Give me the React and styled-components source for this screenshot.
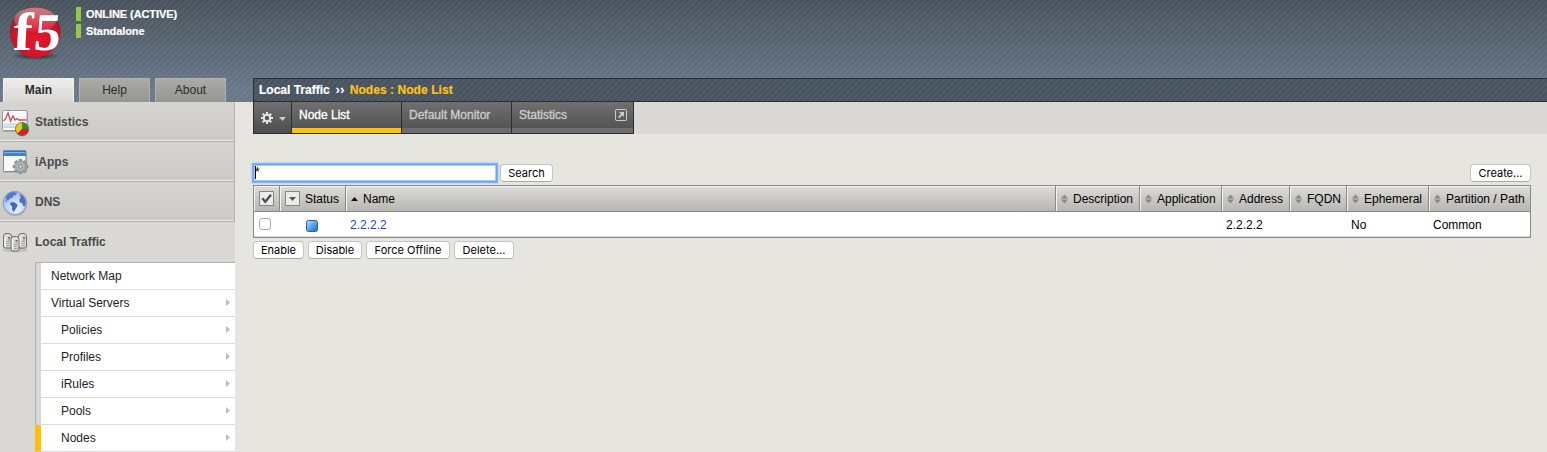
import React from 'react';
import styled, { createGlobalStyle, css } from 'styled-components';

const GlobalStyle = createGlobalStyle`
  * { box-sizing: border-box; }
  html, body { margin: 0; padding: 0; height: 452px; overflow: hidden; }
  body {
    background: #e6e5e0;
    color: #000;
    font: 12px/14px "Liberation Sans", Arial, Helvetica, sans-serif;
  }
`;

const stripes = 'repeating-linear-gradient(135deg, rgba(255,255,255,0.05) 0 1.2px, rgba(255,255,255,0) 1.9px 3.5px, rgba(255,255,255,0.05) 4.243px)';

const Page = styled.div`
  width: 1547px;
  height: 452px;
  overflow: hidden;
`;

const Header = styled.header`
  display: flex;
  height: 102px;
  background: ${stripes}, linear-gradient(#48525c 0, #5a6774 50px, #68788a 90px);
`;

const Brand = styled.div`
  display: flex;
  flex-direction: column;
  justify-content: space-between;
  width: 253px;
  flex: none;
`;

const BrandTop = styled.div`
  display: flex;
  padding: 3px 0 0 6px;
`;

const StatusList = styled.div`
  display: flex;
  flex-direction: column;
  gap: 3px;
  padding: 4px 0 0 12px;
`;

const StatusLine = styled.div`
  height: 14px;
  padding-left: 5px;
  border-left: 5px solid #94c847;
  color: #fff;
  font-size: 11px;
  font-weight: bold;
  white-space: nowrap;
  letter-spacing: -0.08px;
  -webkit-text-stroke: 0.2px #fff;
`;

const Tabs = styled.nav`
  display: flex;
  gap: 5px;
  padding-left: 3px;
`;

const Tab = styled.a`
  width: 71px;
  height: 24px;
  padding-top: 4px;
  border: 1px solid #b1b1ad;
  border-bottom: 0;
  background: linear-gradient(#aaaaa6, #969691);
  color: #2b2b2b;
  text-align: center;
  ${(p) => p.$active && css`
    border-color: #f3f3f1;
    background: linear-gradient(#eeedeb, #d8d7d3);
    font-weight: bold;
  `}
`;

const Breadcrumb = styled.div`
  flex: 1;
  align-self: flex-end;
  display: flex;
  height: 24px;
  padding: 4px 0 0 5px;
  border: 1px solid #2c2e33;
  border-right: 0;
  background: ${stripes}, #485360;
  color: #fff;
  font-weight: bold;
  white-space: pre;
  -webkit-text-stroke: 0.2px currentColor;
`;

const Crumb = styled.span`
  color: ${(p) => (p.$current ? '#ffc20e' : '#fff')};
  letter-spacing: ${(p) => p.$spacing || 0};
  margin-right: ${(p) => p.$gap || 0};
  -webkit-text-stroke: 0.2px currentColor;
`;

const Body = styled.div`
  display: flex;
`;

const Sidebar = styled.aside`
  width: 235px;
  height: 350px;
  flex: none;
  background: #dad9d5;
`;

const Section = styled.a`
  display: flex;
  height: 40px;
  padding-left: 2px;
  color: #4a4a4a;
  font-weight: bold;
  ${(p) => !p.$open && css`
    border-right: 1px solid #b2b1ad;
    border-bottom: 1px solid #acaba8;
    box-shadow: inset 0 -1px #eeeeeb;
    background: linear-gradient(#d5d4d0, #cbcac5);
  `}
`;

const SectionIcon = styled.span`
  width: 33px;
  padding-top: 6px;
`;

const SectionLabel = styled.span`
  padding-top: 13px;
`;

const Submenu = styled.div`
  margin-left: 35px;
  border-top: 1px solid #b2b2b2;
  border-left: 1px solid #b2b2b2;
`;

const SubItem = styled.a`
  display: flex;
  align-items: center;
  justify-content: space-between;
  height: 27px;
  padding: 0 5px 1px ${(p) => (p.$nested ? 20 : 10)}px;
  border-left: 5px solid #d7d7d7;
  border-bottom: 1px solid #dcdcdc;
  background: #fff;
  color: #222;
  ${(p) => p.$active && css`
    margin-left: -1px;
    border-left: 6px solid #ffc107;
  `}
`;

const Main = styled.main`
  flex: 1;
  padding-left: 18px;
`;

const MenuBar = styled.div`
  display: flex;
  height: 32px;
  background: #dad9d5;
`;

const MenuTab = styled.a`
  display: flex;
  justify-content: space-between;
  width: ${(p) => p.$width}px;
  height: 32px;
  padding: 6px 6px 0 7px;
  border-right: 1px solid #2d2d2d;
  border-bottom: 1px solid #2d2d2d;
  background: linear-gradient(#707070, #545454 26px, #6d6d6d 26px);
  color: #ccc;
  -webkit-text-stroke: 0.35px currentColor;
  ${(p) => p.$active && css`
    color: #fff;
    background: linear-gradient(#707070, #545454 26px, #ffc20e 26px);
  `}
  ${(p) => p.$gear && css`
    padding: 8px 5px 0 6px;
    border-left: 1px solid #2d2d2d;
    background: linear-gradient(#707070, #4c4c4c);
  `}
`;

const Toolbar = styled.div`
  display: flex;
  align-items: center;
  height: 20px;
  margin: 29px 16px 2px 0;
`;

const SearchInput = styled.div`
  width: 244px;
  height: 18px;
  margin-right: 3px;
  padding-left: 1px;
  border: 1px solid #6ba5f0;
  outline: 1px solid #83b3f1;
  box-shadow: 0 0 2px 1px #8fbaf2, inset 0 0 0 1px #a5cbf7;
  background: #fff;
  line-height: 15px;
`;

const Caret = styled.span`
  display: inline-block;
  width: 1px;
  height: 13px;
  margin-right: -1px;
  background: #000;
  vertical-align: top;
  margin-top: 1px;
`;

const Button = styled.button`
  width: ${(p) => p.$width}px;
  height: 18px;
  padding: 0;
  border: 1px solid #c4c4c1;
  border-bottom-color: #aaa;
  border-radius: 4px;
  background: #fff;
  color: #000;
  font: 11px/15px Inter, sans-serif;
  letter-spacing: 0;
  margin-left: ${(p) => (p.$end ? 'auto' : 0)};
`;

const Table = styled.div`
  margin-right: 16px;
  border: 1px solid #888885;
`;

const Row = styled.div`
  display: grid;
  grid-template-columns: 26px 66px 1fr 84px 82px 68px 57px 82px 101px;
`;

const HeadCell = styled.div`
  display: flex;
  align-items: center;
  gap: 5px;
  height: 26px;
  padding-left: 5px;
  border-right: ${(p) => (p.$last ? 0 : '1px solid #888885')};
  border-bottom: 1px solid #888885;
  box-shadow: inset 1px 1px #f3f3f1;
  background: linear-gradient(#dddcd9, #b7b6b1);
  white-space: nowrap;
`;

const Cell = styled.div`
  display: flex;
  height: 25px;
  padding: 6px 0 0 ${(p) => p.$pad || 4}px;
  border-bottom: 1px solid #ddd;
  background: #fff;
  color: ${(p) => (p.$link ? '#1a48bd' : '#000')};
`;

const Checkbox = styled.span`
  width: 12px;
  height: 12px;
  border: 1px solid #aaa;
  border-radius: 3px;
  background: #fff;
`;

const StatusIcon = styled.span`
  width: 12px;
  height: 12px;
  margin-top: 2px;
  border: 1px solid #2462a4;
  border-radius: 2.5px;
  background: linear-gradient(135deg, #b5d9fb, #4b98e6 60%, #1c70cd);
`;

const Actions = styled.div`
  display: flex;
  gap: 4px;
  padding-top: 3px;
`;

const Logo = () => (
  <svg width="58" height="58" viewBox="0 0 58 58">
    <defs>
      <radialGradient id="ball" cx="0.5" cy="0.62" r="0.58">
        <stop offset="0" stopColor="#e5162b" />
        <stop offset="0.65" stopColor="#d2142a" />
        <stop offset="1" stopColor="#96202b" />
      </radialGradient>
      <linearGradient id="gloss" x1="0" y1="0" x2="0" y2="1">
        <stop offset="0" stopColor="#e9b9b9" stopOpacity="0.6" />
        <stop offset="1" stopColor="#fff" stopOpacity="0" />
      </linearGradient>
      <radialGradient id="shade">
        <stop offset="0" stopColor="#171e25" stopOpacity="0.9" />
        <stop offset="1" stopColor="#171e25" stopOpacity="0" />
      </radialGradient>
    </defs>
    <ellipse cx="29.5" cy="53" rx="25" ry="4" fill="url(#shade)" />
    <circle cx="29.3" cy="29.2" r="25.5" fill="url(#ball)" />
    <ellipse cx="29.3" cy="17" rx="21" ry="12.5" fill="url(#gloss)" />
    <g fill="#fff" fontFamily="Liberation Serif, serif" fontWeight="bold">
      <text transform="translate(6.500 47) skewX(-3) scale(1.08 1)" fontSize="54">f</text>
      <text transform="translate(27 47) skewX(-5)" fontSize="53">5</text>
    </g>
  </svg>
);

const StatisticsIcon = () => (
  <svg width="30" height="30" viewBox="0 0 30 30">
    <rect x="1" y="3" width="25" height="21" rx="1" fill="#8c8c8a" opacity=".6" />
    <rect x="0.5" y="2.5" width="24.5" height="20" rx="1" fill="#fafafa" stroke="#989896" />
    <path d="M1.500 16.500h23M1.500 19h23" stroke="#c6d9e6" strokeWidth="1.8" />
    <path d="M1.500 13l2-2 2.500-6 2.500 8 2.500-5 2 4 2-1.500 2 1.500h7.500" fill="none" stroke="#c94a5a" strokeWidth="1.300" />
    <circle cx="20.300" cy="21.500" r="7" fill="#555" opacity=".4" />
    <circle cx="20" cy="21" r="6.500" fill="#f2c61c" />
    <path d="M20 21V14.500A6.500 6.500 0 0 1 26.500 21z" fill="#23982a" />
    <path d="M20 21H26.500A6.500 6.500 0 0 1 15.400 25.600z" fill="#d81c37" />
    <circle cx="20" cy="21" r="6.500" fill="none" stroke="#675b2b" strokeWidth=".7" />
  </svg>
);

const teeth = [0, 45, 90, 135];

const IAppsIcon = () => (
  <svg width="30" height="30" viewBox="0 0 30 30">
    <rect x="1.500" y="3.500" width="23" height="21" rx="1" fill="#777" opacity=".5" />
    <rect x="1.500" y="3" width="22.500" height="20.500" rx="1" fill="#f8f9fb" stroke="#85888c" />
    <path d="M1.500 3h22.500v5h-22.500z" fill="#3f80cb" />
    <path d="M2 4.500h21.500" stroke="#74b5f2" strokeWidth="1.200" />
    <path d="M1.500 3h22.500" stroke="#27589c" strokeWidth=".8" />
    <g transform="translate(18.500 18.500)">
      {teeth.map((a) => (
        <rect key={a} x="-1.600" y="-7.300" width="3.200" height="14.600" rx=".7" fill="#929c9f" stroke="#717b7e" strokeWidth=".6" transform={`rotate(${a})`} />
      ))}
      <circle r="5.400" fill="#a0abad" />
      <circle r="3.300" fill="#c0c8ca" />
      <circle r="1.900" fill="#e0e2e0" stroke="#697376" />
    </g>
  </svg>
);

const DnsIcon = () => (
  <svg width="30" height="30" viewBox="0 0 30 30">
    <defs>
      <radialGradient id="sea" cx=".55" cy=".7" r=".65">
        <stop offset="0" stopColor="#f4f9ff" />
        <stop offset="1" stopColor="#9dbaf0" />
      </radialGradient>
    </defs>
    <circle cx="13.300" cy="15.800" r="12" fill="#777" opacity=".45" />
    <circle cx="12.800" cy="15" r="11.700" fill="url(#sea)" stroke="#8494b2" strokeWidth=".9" />
    <path d="M3.500 9.500C5 6 8 4 12 4l3 1-1.500 2.500-2-.5-.5 2.500-3 1-1.500 2-2-.5-1.500 1 2.500 1.500z" fill="#5679cc" />
    <path d="M8.500 14.500l3-.5 3.500 2 .5 2-1.500 2.500-2.500 3.500-1.500-2.500v-3l-2-2z" fill="#4368bd" />
    <path d="M18 6l3 2 2 3 .800 4-1 3.500-2-1-.5-2.500-2.500-.5-.5-3 2-2-1.500-1z" fill="#4b6ec2" />
  </svg>
);

const Server = ({ x, y }) => (
  <g transform={`translate(${x} ${y})`}>
    <path d="M.5 3Q.500 1 3 .5h3Q8.500 1 8.500 3v11l-1.500 1H2L.5 14z" fill="#d9d9d6" stroke="#6d6d6b" />
    <path d="M2 3.500v10" stroke="#fff" />
    <path d="M3 8.500h4M3 10.500h4M3 12.500h4" stroke="#999996" strokeWidth=".8" />
    <rect x="5" y="4" width="2" height="1.500" fill="#dd2332" />
    <rect x="5" y="6.300" width="2" height="1.200" fill="#62c848" />
  </g>
);

const LocalTrafficIcon = () => (
  <svg width="30" height="30" viewBox="0 0 30 30">
    <ellipse cx="13" cy="22" rx="13" ry="2.500" fill="#777" opacity=".25" />
    <Server x="1" y="5" />
    <Server x="16" y="5" />
    <Server x="8.500" y="8" />
  </svg>
);

const Arrow = () => (
  <svg width="4" height="7" viewBox="0 0 4 7"><path d="M0 0L4 3.500 0 7z" fill="#bcbcbc" /></svg>
);

const GearIcon = () => (
  <svg width="14" height="16" viewBox="-7 -8 14 16">
    {teeth.map((a) => (
      <rect key={a} x="-1" y="-6" width="2" height="12" fill="#e5e5e5" transform={`rotate(${a})`} />
    ))}
    <circle r="3.200" fill="#595959" stroke="#e5e5e5" strokeWidth="2" />
  </svg>
);

const CaretDown = () => (
  <svg width="7" height="16" viewBox="0 0 7 16"><path d="M0 7h7L3.500 11z" fill="#ccc" /></svg>
);

const PopoutIcon = () => (
  <svg width="12" height="14" viewBox="0 0 12 14">
    <rect x=".5" y="1.500" width="11" height="11" rx="1" fill="none" stroke="#ccc" />
    <path d="M4 4h5v5L7.300 7.300 4.300 10.300 3 9 6 6z" fill="#ccc" />
  </svg>
);

const Sorter = () => (
  <svg width="7" height="10" viewBox="0 0 7 10"><path d="M0 4.500L3.500.5 7 4.500zM0 5.500h7L3.500 9.500z" fill="#888" /></svg>
);

const SortUp = () => (
  <svg width="7" height="4" viewBox="0 0 7 4"><path d="M0 4L3.500 0 7 4z" fill="#111" /></svg>
);

const CheckAll = () => (
  <svg width="15" height="15" viewBox="0 0 15 15">
    <rect x=".5" y=".5" width="14" height="14" fill="#ecebea" stroke="#858583" />
    <path d="M3.300 7.300l3 3.500L12 3.800" fill="none" stroke="#4b4b4b" strokeWidth="2.300" />
  </svg>
);

const DropBox = () => (
  <svg width="15" height="15" viewBox="0 0 15 15">
    <rect x=".5" y=".5" width="14" height="14" fill="#ecebea" stroke="#858583" />
    <path d="M4 6h7L7.500 10z" fill="#555" />
  </svg>
);

const sections = [
  { label: 'Statistics', Icon: StatisticsIcon },
  { label: 'iApps', Icon: IAppsIcon },
  { label: 'DNS', Icon: DnsIcon },
  { label: 'Local Traffic', Icon: LocalTrafficIcon, open: true },
];

const subItems = [
  { label: 'Network Map', leaf: true },
  { label: 'Virtual Servers' },
  { label: 'Policies', nested: true },
  { label: 'Profiles', nested: true },
  { label: 'iRules', nested: true },
  { label: 'Pools', nested: true },
  { label: 'Nodes', nested: true, active: true },
];

const columns = ['Description', 'Application', 'Address', 'FQDN', 'Ephemeral', 'Partition / Path'];

export default function App() {
  return (
    <Page>
      <GlobalStyle />
      <Header>
        <Brand>
          <BrandTop>
            <Logo />
            <StatusList>
              <StatusLine>ONLINE (ACTIVE)</StatusLine>
              <StatusLine>Standalone</StatusLine>
            </StatusList>
          </BrandTop>
          <Tabs>
            <Tab $active>Main</Tab>
            <Tab>Help</Tab>
            <Tab>About</Tab>
          </Tabs>
        </Brand>
        <Breadcrumb>
          <Crumb $gap="6px">Local Traffic</Crumb>
          <Crumb $gap="5px" $spacing="0.5px">››</Crumb>
          <Crumb $current $spacing="0.06px">Nodes : Node List</Crumb>
        </Breadcrumb>
      </Header>
      <Body>
        <Sidebar>
          {sections.map(({ label, Icon, open }) => (
            <Section key={label} $open={open}>
              <SectionIcon><Icon /></SectionIcon>
              <SectionLabel>{label}</SectionLabel>
            </Section>
          ))}
          <Submenu>
            {subItems.map(({ label, nested, active, leaf }) => (
              <SubItem key={label} $nested={nested} $active={active}>
                {label}
                {!leaf && <Arrow />}
              </SubItem>
            ))}
          </Submenu>
        </Sidebar>
        <Main>
          <MenuBar>
            <MenuTab $gear $width={39}><GearIcon /><CaretDown /></MenuTab>
            <MenuTab $active $width={110}>Node List</MenuTab>
            <MenuTab $width={110}>Default Monitor</MenuTab>
            <MenuTab $width={122}>Statistics<PopoutIcon /></MenuTab>
          </MenuBar>
          <Toolbar>
            <SearchInput><Caret />*</SearchInput>
            <Button $width={53}>Search</Button>
            <Button $width={61} $end>Create...</Button>
          </Toolbar>
          <Table>
            <Row>
              <HeadCell><CheckAll /></HeadCell>
              <HeadCell><DropBox />Status</HeadCell>
              <HeadCell><SortUp />Name</HeadCell>
              {columns.map((c, i) => (
                <HeadCell key={c} $last={i === columns.length - 1}><Sorter />{c}</HeadCell>
              ))}
            </Row>
            <Row>
              <Cell $pad={5}><Checkbox /></Cell>
              <Cell $pad={26}><StatusIcon /></Cell>
              <Cell $link>2.2.2.2</Cell>
              <Cell />
              <Cell />
              <Cell>2.2.2.2</Cell>
              <Cell />
              <Cell>No</Cell>
              <Cell>Common</Cell>
            </Row>
          </Table>
          <Actions>
            <Button $width={51}>Enable</Button>
            <Button $width={54}>Disable</Button>
            <Button $width={84}>Force Offline</Button>
            <Button $width={60}>Delete...</Button>
          </Actions>
        </Main>
      </Body>
    </Page>
  );
}
